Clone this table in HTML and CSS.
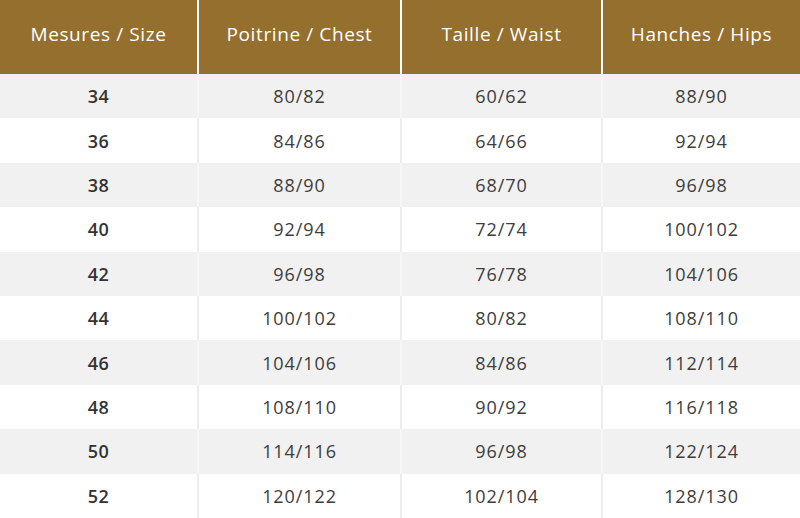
FILE: index.html
```html
<!DOCTYPE html>
<html lang="fr">
<head>
<meta charset="utf-8">
<title>Guide des tailles</title>
<link rel="stylesheet" href="styles.css">
</head>
<body>
<table class="size-table">
  <colgroup>
    <col class="col-size">
    <col class="col-chest">
    <col class="col-waist">
    <col class="col-hips">
  </colgroup>
  <thead>
    <tr><th>Mesures / Size</th><th>Poitrine / Chest</th><th>Taille / Waist</th><th>Hanches / Hips</th></tr>
  </thead>
  <tbody>
    <tr><td class="size">34</td><td>80/82</td><td>60/62</td><td>88/90</td></tr>
    <tr><td class="size">36</td><td>84/86</td><td>64/66</td><td>92/94</td></tr>
    <tr><td class="size">38</td><td>88/90</td><td>68/70</td><td>96/98</td></tr>
    <tr><td class="size">40</td><td>92/94</td><td>72/74</td><td>100/102</td></tr>
    <tr><td class="size">42</td><td>96/98</td><td>76/78</td><td>104/106</td></tr>
    <tr><td class="size">44</td><td>100/102</td><td>80/82</td><td>108/110</td></tr>
    <tr><td class="size">46</td><td>104/106</td><td>84/86</td><td>112/114</td></tr>
    <tr><td class="size">48</td><td>108/110</td><td>90/92</td><td>116/118</td></tr>
    <tr><td class="size">50</td><td>114/116</td><td>96/98</td><td>122/124</td></tr>
    <tr><td class="size">52</td><td>120/122</td><td>102/104</td><td>128/130</td></tr>
  </tbody>
</table>
</body>
</html>
```
FILE: styles.css
```css
html, body {
  margin: 0;
  padding: 0;
  background: #ffffff;
}
.size-table {
  width: 800px;
  border-collapse: collapse;
  table-layout: fixed;
  font-family: "Open Sans", "Noto Sans", sans-serif;
}
.col-size { width: 198px; }
.col-chest { width: 203px; }
.col-waist { width: 201px; }
.col-hips { width: 198px; }
.size-table th {
  height: 68px;
  padding: 0 0 6px;
  background: #946f2e;
  color: #ffffff;
  font-size: 19px;
  font-weight: 500;
  letter-spacing: 0.6px;
  text-align: center;
  border-right: 2px solid #ffffff;
}
.size-table td {
  height: 44.4px;
  padding: 0;
  text-align: center;
  font-size: 18px;
  font-weight: 400;
  letter-spacing: 0.9px;
  color: #3d3d3d;
  border-right: 2px solid #ededed;
}
.size-table th:last-child,
.size-table td:last-child {
  border-right: none;
}
.size-table tbody tr:nth-child(odd) td {
  background: #f1f1f1;
  border-right-color: #f6f6f6;
}
.size-table tbody tr:nth-child(odd) td:last-child {
  border-right: none;
}
.size-table td.size {
  font-weight: 600;
  letter-spacing: 0.4px;
  color: #333333;
}
```
